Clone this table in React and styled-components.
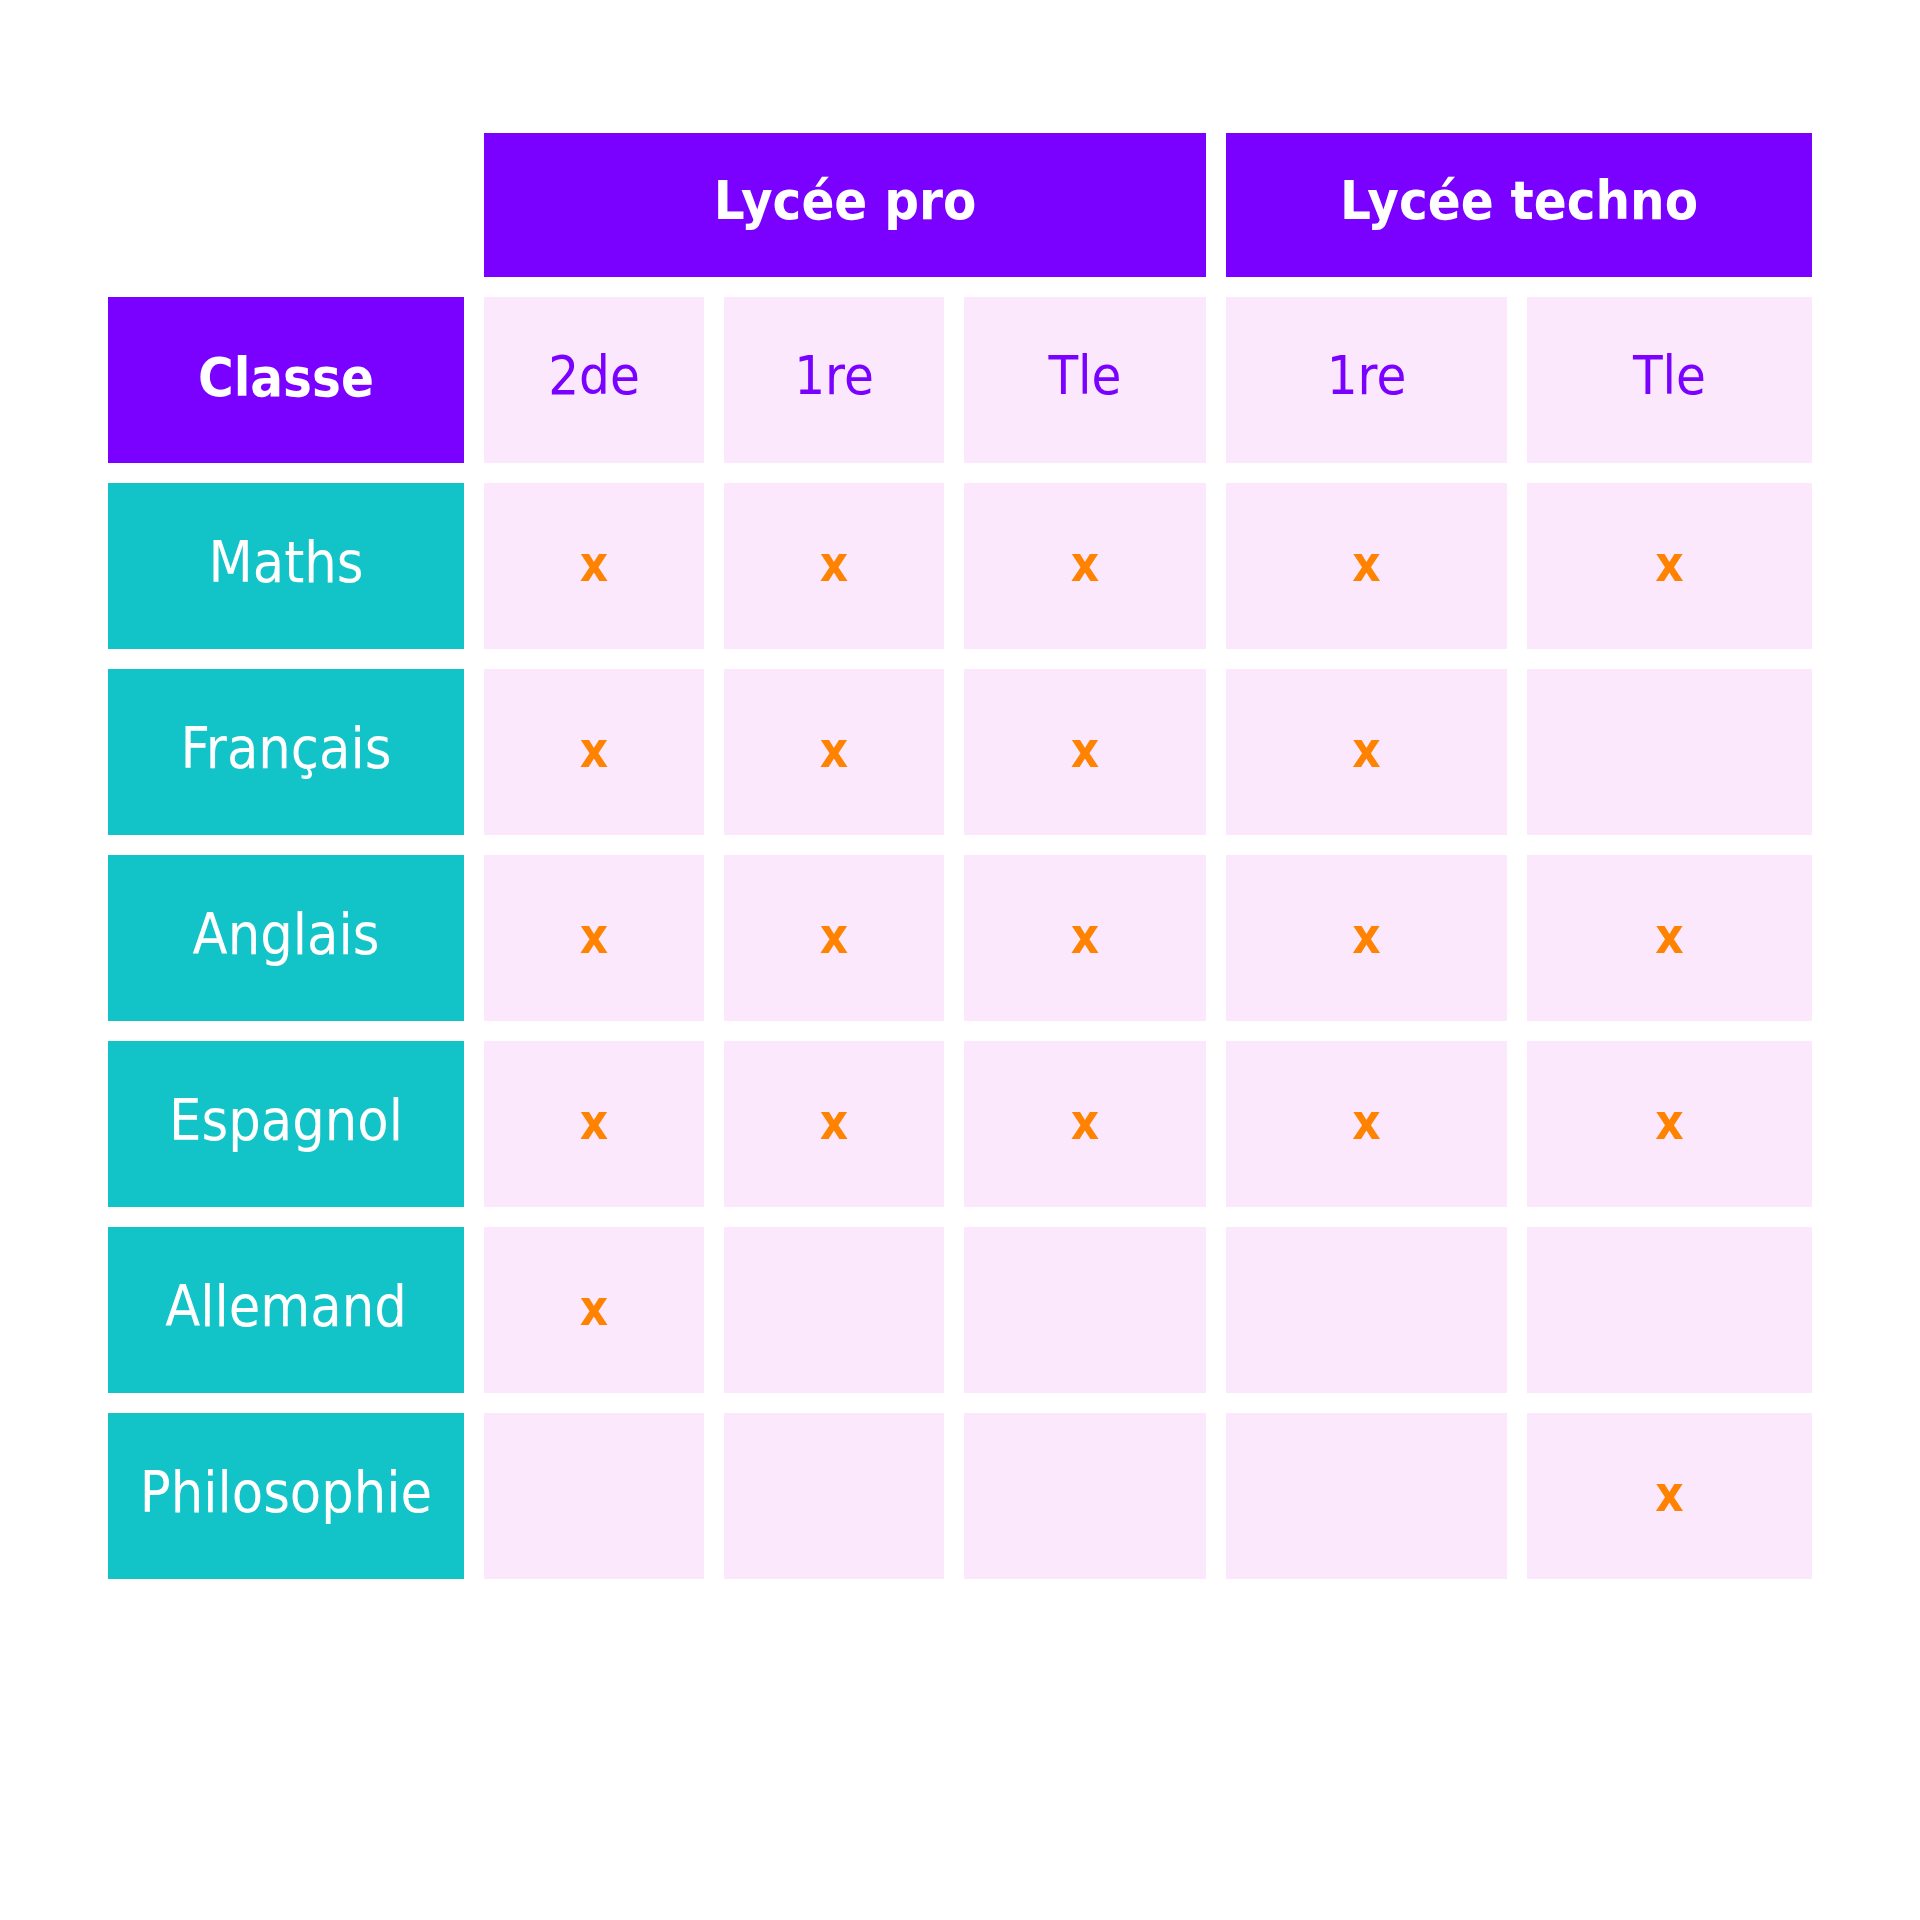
import React from "react";
import styled, { createGlobalStyle } from "styled-components";

const Global = createGlobalStyle`
  html, body { margin: 0; padding: 0; background: #ffffff; }
  body { font-family: "DejaVu Sans Condensed", "DejaVu Sans", sans-serif; }
`;

const Page = styled.div`
  width: 1920px;
  height: 1920px;
  box-sizing: border-box;
  padding: 133px 0 0 108px;
  background: #ffffff;
`;

const Grid = styled.div`
  display: grid;
  grid-template-columns: 356px 220px 220px 242px 281px 285px;
  grid-template-rows: 144px repeat(7, 166px);
  gap: 20px;
`;

const Cell = styled.div`
  display: flex;
  align-items: center;
  justify-content: center;
  box-sizing: border-box;
  font-family: "DejaVu Sans Condensed", "DejaVu Sans", sans-serif;
  line-height: 1;
`;

const Spacer = styled.div``;

const GroupHead = styled(Cell)`
  grid-column: span ${(p) => p.$span};
  background: #7a00ff;
  color: #ffffff;
  font-weight: 700;
  font-size: 54px;
  padding-bottom: 8px;
`;

const CornerHead = styled(Cell)`
  background: #7a00ff;
  color: #ffffff;
  font-weight: 700;
  font-size: 54px;
  padding-bottom: 4px;
`;

const GradeHead = styled(Cell)`
  background: #fbe8fd;
  color: #7a00ff;
  font-size: 54px;
  padding-bottom: 8px;
`;

const SubjectCell = styled(Cell)`
  background: #12c3c8;
  color: #ffffff;
  font-size: 57px;
  padding-bottom: 8px;
`;

const MarkCell = styled(Cell)`
  background: #fbe8fd;
  color: #ff8200;
  font-weight: 700;
  font-size: 49px;
  padding-bottom: 4px;
`;

const grades = ["2de", "1re", "Tle", "1re", "Tle"];

const subjects = [
  { name: "Maths", marks: [1, 1, 1, 1, 1] },
  { name: "Français", marks: [1, 1, 1, 1, 0] },
  { name: "Anglais", marks: [1, 1, 1, 1, 1] },
  { name: "Espagnol", marks: [1, 1, 1, 1, 1] },
  { name: "Allemand", marks: [1, 0, 0, 0, 0] },
  { name: "Philosophie", marks: [0, 0, 0, 0, 1] },
];

export default function App() {
  return (
    <Page>
      <Global />
      <Grid>
        <Spacer />
        <GroupHead $span={3}>Lycée pro</GroupHead>
        <GroupHead $span={2}>Lycée techno</GroupHead>

        <CornerHead>Classe</CornerHead>
        {grades.map((g, i) => (
          <GradeHead key={i}>{g}</GradeHead>
        ))}

        {subjects.map((s) => (
          <React.Fragment key={s.name}>
            <SubjectCell>{s.name}</SubjectCell>
            {s.marks.map((m, i) => (
              <MarkCell key={i}>{m ? "x" : ""}</MarkCell>
            ))}
          </React.Fragment>
        ))}
      </Grid>
    </Page>
  );
}
